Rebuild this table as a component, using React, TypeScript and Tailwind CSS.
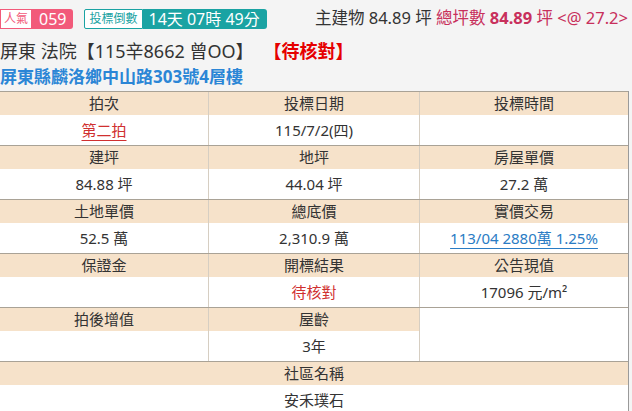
import React from "react";

const font = { fontFamily: '"Noto Sans", "Noto Sans CJK TC", sans-serif' };

function Pair({
  heads,
  vals,
}: {
  heads: React.ReactNode[];
  vals: React.ReactNode[];
}) {
  return (
    <div className="grid grid-cols-[208px_211px_209px] border-t border-[#a9a296]">
      {heads.map((h, i) => (
        <div
          key={"h" + i}
          className={`h-[23px] bg-[#f6e2ca] flex items-center justify-center text-[15px] text-[#333] leading-none ${
            i > 0 ? "border-l border-[#d6cec2]" : ""
          }`}
        >
          {h}
        </div>
      ))}
      {vals.map((v, i) => (
        <div
          key={"v" + i}
          className={`h-[30px] bg-white flex items-center justify-center text-[15px] text-[#333] leading-none ${
            i > 0 ? "border-l border-[#d6cec2]" : ""
          }`}
        >
          {v}
        </div>
      ))}
    </div>
  );
}

export default function App() {
  return (
    <div
      className="w-[632px] h-[411px] bg-[#f4f4f4] overflow-hidden text-[#333]"
      style={font}
    >
      <div className="flex items-center h-[36px] pt-[1px]">
        <div className="flex h-[20px] items-stretch">
          <div className="flex items-center bg-white border border-[#f25a7a] px-[3px] text-[12px] text-[#f25a7a] leading-none">
            人氣
          </div>
          <div className="flex items-center bg-[#f25a7a] text-white text-[16px] leading-none pl-[7px] pr-[7px] rounded-r-[3px]">
            059
          </div>
        </div>
        <div className="flex h-[20px] items-stretch ml-[11px]">
          <div className="flex items-center bg-white border border-[#1aa3a3] px-[4px] text-[12px] text-[#1aa3a3] leading-none rounded-l-[2px]">
            投標倒數
          </div>
          <div className="flex items-center bg-[#1aa3a3] text-white text-[16px] leading-none pl-[6px] pr-[7px] rounded-r-[3px]">
            14天 07時 49分
          </div>
        </div>
        <div className="ml-auto mr-[4px] text-[16.5px] leading-none whitespace-nowrap">
          <span className="text-[#333]">主建物 84.89 坪 </span>
          <span className="text-[#c8305c]">
            總坪數 <b>84.89</b> 坪 &lt;@ 27.2&gt;
          </span>
        </div>
      </div>
      <div className="flex items-center h-[30px] text-[18px] leading-none whitespace-nowrap">
        <span className="text-[#333]">屏東 法院【115辛8662 曾OO】</span>
        <span className="text-[#e60000] font-bold ml-[10px]">【待核對】</span>
      </div>
      <div className="flex items-center h-[20px] text-[17px] leading-none font-bold text-[#2b86d6] whitespace-nowrap">
        屏東縣麟洛鄉中山路303號4層樓
      </div>
      <div className="mt-[5px] w-[629px] border-r border-[#9a9a9a]">
        <Pair
          heads={["拍次", "投標日期", "投標時間"]}
          vals={[
            <span className="text-[#d03030] underline underline-offset-[4px] decoration-[#d03030]">
              第二拍
            </span>,
            "115/7/2(四)",
            "",
          ]}
        />
        <Pair
          heads={["建坪", "地坪", "房屋單價"]}
          vals={["84.88 坪", "44.04 坪", "27.2 萬"]}
        />
        <Pair
          heads={["土地單價", "總底價", "實價交易"]}
          vals={[
            "52.5 萬",
            "2,310.9 萬",
            <span className="text-[#2a7cc4] underline underline-offset-[4px] decoration-[#2a7cc4]">
              113/04 2880萬 1.25%
            </span>,
          ]}
        />
        <Pair
          heads={["保證金", "開標結果", "公告現值"]}
          vals={[
            "",
            <span className="text-[#d03030]">待核對</span>,
            <span>17096 元/m²</span>,
          ]}
        />
        <div className="grid grid-cols-[208px_211px_209px] grid-rows-[23px_30px] border-t border-[#a9a296]">
          <div className="bg-[#f6e2ca] flex items-center justify-center text-[15px] leading-none">
            拍後增值
          </div>
          <div className="bg-[#f6e2ca] flex items-center justify-center text-[15px] leading-none border-l border-[#d6cec2]">
            屋齡
          </div>
          <div className="row-span-2 bg-white border-l border-[#d6cec2]"></div>
          <div className="bg-white"></div>
          <div className="bg-white flex items-center justify-center text-[15px] leading-none border-l border-[#d6cec2]">
            3年
          </div>
        </div>
        <div className="border-t border-[#a9a296]">
          <div className="h-[23px] bg-[#f6e2ca] flex items-center justify-center text-[15px] leading-none">
            社區名稱
          </div>
          <div className="h-[30px] bg-white flex items-center justify-center text-[15px] leading-none">
            安禾璞石
          </div>
        </div>
      </div>
    </div>
  );
}
